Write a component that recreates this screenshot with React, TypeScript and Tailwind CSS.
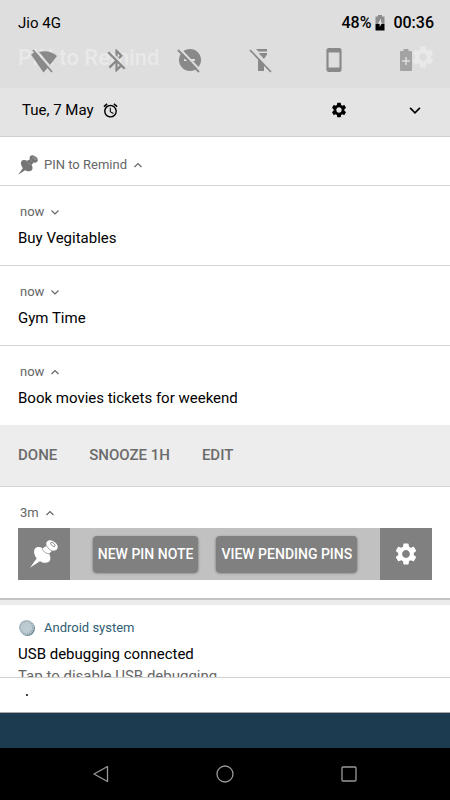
import type { ReactNode } from 'react'
import clsx from 'clsx'
import { MdAlarm, MdBluetoothDisabled, MdSettings, MdStayCurrentPortrait } from 'react-icons/md'

type Note = {
  title: string
  expanded?: boolean
}

const notes: Note[] = [
  { title: 'Buy Vegitables' },
  { title: 'Gym Time' },
  { title: 'Book movies tickets for weekend', expanded: true }
]

const noteActions = ['Done', 'Snooze 1h', 'Edit']

function Chevron({ up, className = 'h-2.5 w-2.5' }: { up?: boolean; className?: string }) {
  return (
    <svg viewBox="0 0 10 10" className={clsx('fill-none stroke-current', className)} aria-hidden="true">
      <path d={up ? 'M1.5 7 5 3.5 8.5 7' : 'M1.5 3.5 5 7 8.5 3.5'} strokeWidth="1.2" />
    </svg>
  )
}

function PushPin({ className, line }: { className?: string; line: string }) {
  return (
    <svg viewBox="0 0 82 82" className={clsx('fill-current', className)} aria-hidden="true">
      <path d="M0 81 21 52 31 61Z" />
      <path d="M14 26C19 19 28 19 37 24L49 17C45 7 51 0 60 1C72 3 83 14 81 23C79 31 72 33 65 31L56 40C61 50 61 59 55 64C47 70 32 66 23 57C13 47 9 34 14 26Z" />
      <path d="M36 24C37 33 46 40 56 40M49 17C52 24 58 30 65 31" fill="none" stroke={line} strokeWidth="2" />
      <ellipse cx="67" cy="13" rx="8" ry="4" transform="rotate(42 67 13)" fill="none" stroke={line} strokeWidth="2.5" />
    </svg>
  )
}

function WifiOff() {
  return (
    <svg viewBox="0 0 28 26" className="h-6.5 w-7 fill-current" aria-hidden="true">
      <path d="M9 5C15 3 23 5 27 9L20 18ZM1 7.5 5 5 18 20.5 13.5 25.5Z" />
      <path d="M3 3 22 25" fill="none" stroke="currentColor" strokeWidth="1.8" />
    </svg>
  )
}

function DndOff() {
  return (
    <svg viewBox="0 0 26 26" className="h-6.5 w-6.5 fill-current" aria-hidden="true">
      <circle cx="14" cy="13" r="11" />
      <path d="M8 13H11M15 13H19" stroke="#dedede" strokeWidth="2" />
      <path d="M3 1 25 24" stroke="#dedede" strokeWidth="2" />
      <path d="M2 3 23 25" stroke="currentColor" strokeWidth="2" />
    </svg>
  )
}

function FlashlightOff() {
  return (
    <svg viewBox="0 0 26 26" className="h-6.5 w-6.5 fill-current" aria-hidden="true">
      <path d="M8 2H19V4.5H10.5ZM11.5 6H19V7.5L16 12 11 6.5ZM10 11 16 17.5V24H10Z" />
      <path d="M2 3 23 25" stroke="currentColor" strokeWidth="1.8" />
    </svg>
  )
}

function BatterySaver() {
  return (
    <svg viewBox="0 0 12 22" className="h-5.5 w-3 text-[#a3a3a3]" aria-hidden="true">
      <path d="M3.5 0H8.5V2H11Q12 2 12 3V21Q12 22 11 22H1Q0 22 0 21V3Q0 2 1 2H3.5Z" fill="currentColor" />
      <path d="M6 8V16M2 12H10" stroke="#dedede" strokeWidth="1.5" />
    </svg>
  )
}

function BatteryCharging() {
  return (
    <svg viewBox="0 0 10 16" className="h-4 w-2.5" aria-hidden="true">
      <path d="M3 0H7V1.5H9.5V9H0.5V1.5H3Z" fill="#8c8c8c" />
      <path d="M0.5 9H9.5V15.5H0.5Z" fill="#000" />
      <path d="M6 3.5 3 8.5H4.7V12L7.3 7.5H6Z" fill="#e6e6e6" />
    </svg>
  )
}

function IconButton({ label, className, children }: { label: string; className?: string; children: ReactNode }) {
  return (
    <button type="button" aria-label={label} className={clsx('flex items-center justify-center', className)}>
      {children}
    </button>
  )
}

const quickTiles: { label: string; icon: ReactNode }[] = [
  { label: 'Wi-Fi', icon: <WifiOff /> },
  { label: 'Bluetooth', icon: <MdBluetoothDisabled size={27} /> },
  { label: 'Do not disturb', icon: <DndOff /> },
  { label: 'Flashlight', icon: <FlashlightOff /> },
  { label: 'Auto-rotate', icon: <MdStayCurrentPortrait size={26} /> },
  { label: 'Battery saver', icon: <BatterySaver /> }
]

function QuickSettings() {
  return (
    <header className="border-b border-[#cfcfcf] bg-[#dedede] text-[15px] text-black">
      <div className="flex h-11 items-center justify-between pt-0.5 pr-4 pl-4.5">
        <span>Jio 4G</span>
        <div className="flex items-center gap-1 text-base font-medium">
          <span>48%</span>
          <BatteryCharging />
          <span className="ml-1">00:36</span>
        </div>
      </div>
      <div className="relative h-11">
        {/* app bar showing faintly through the shade */}
        <div className="absolute inset-0 flex items-start justify-between pr-3.5 pl-4.5 text-[#e9e9e9]" aria-hidden="true">
          <span className="text-[22px]/7 font-medium">PIN to Remind</span>
          <MdSettings size={26} />
        </div>
        <div className="relative flex items-center justify-between px-7.5 pt-0.5 text-[#898989]">
          {quickTiles.map((tile) => (
            <IconButton key={tile.label} label={tile.label} className="h-7 w-7">{tile.icon}</IconButton>
          ))}
        </div>
      </div>
      <div className="flex h-12 items-center justify-between bg-[#e4e4e4] pr-7 pb-1 pl-5.5">
        <div className="flex items-center gap-2">
          <span>Tue, 7 May</span>
          <MdAlarm size={17} />
        </div>
        <div className="flex items-center gap-15">
          <IconButton label="Settings"><MdSettings size={18} /></IconButton>
          <IconButton label="Expand"><Chevron className="h-3.5 w-3.5" /></IconButton>
        </div>
      </div>
    </header>
  )
}

function NoteRow({ note }: { note: Note }) {
  return (
    <article className="border-b border-[#d6d6d6]">
      <div className="px-4.5 pt-4 pb-[15px]">
        <button type="button" aria-expanded={!!note.expanded} className="flex items-center gap-1.5 px-0.5 text-[13px]/5 text-[#666]">
          now
          <Chevron up={note.expanded} />
        </button>
        <h2 className="mt-1 text-[15px]/6">{note.title}</h2>
      </div>
      {note.expanded && (
        <div className="flex h-[61px] items-center gap-8 bg-[#ededed] px-4.5 text-[15px] font-medium text-[#6b6b6b]">
          {noteActions.map((action) => (
            <button key={action} type="button" className="uppercase">{action}</button>
          ))}
        </div>
      )}
    </article>
  )
}

function PinToolbar() {
  return (
    <div className="px-4.5 pt-4 pb-4.5">
      <button type="button" aria-expanded="true" className="flex items-center gap-1.5 px-0.5 text-[13px]/5 text-[#666]">
        3m
        <Chevron up />
      </button>
      <div className="mt-[5px] flex h-13 items-stretch bg-[#c1c1c1] text-white">
        <IconButton label="Pin" className="w-13 bg-[#808080]"><PushPin className="h-7 w-7" line="#808080" /></IconButton>
        <div className="flex flex-1 items-center justify-center gap-4.5 text-sm font-medium">
          <button type="button" className="h-9 rounded bg-[#808080] px-[5px] whitespace-nowrap shadow-sm shadow-black/40">NEW PIN NOTE</button>
          <button type="button" className="h-9 rounded bg-[#808080] px-[5px] whitespace-nowrap shadow-sm shadow-black/40">VIEW PENDING PINS</button>
        </div>
        <IconButton label="Pin settings" className="w-13 bg-[#808080]"><MdSettings size={26} /></IconButton>
      </div>
    </div>
  )
}

function SystemNotification() {
  return (
    <section className="bg-white">
      <div className="h-18 overflow-hidden px-4.5 pt-[13px]">
        <div className="flex items-center gap-2 text-[13px]/5 text-[#2f5d73]">
          <svg viewBox="0 0 18 18" className="h-4.5 w-4.5" aria-hidden="true">
            <circle cx="9.5" cy="9.5" r="7.5" fill="#6f8a97" />
            <circle cx="8.5" cy="8.5" r="7.5" fill="#bccad1" />
            <circle cx="8.5" cy="8.5" r="6.3" fill="none" stroke="#90a4ae" strokeWidth="1.5" strokeDasharray="1 1" />
          </svg>
          <span>Android system</span>
        </div>
        <h2 className="mt-1 text-[15px]/6">USB debugging connected</h2>
        <p className="text-[15px]/5 text-[#666]">Tap to disable USB debugging</p>
      </div>
      <div className="flex h-9 items-center border-t border-b border-t-[#d0d0d0] border-b-[#a8a8a8] pl-6.5">
        <span className="h-0.5 w-0.5 bg-[#444]" />
      </div>
    </section>
  )
}

function NavigationBar() {
  return (
    <nav className="flex h-13 items-center justify-between bg-black px-23 text-[#999]">
      <IconButton label="Back">
        <svg viewBox="0 0 18 18" className="h-4.5 w-4.5 fill-none stroke-current" aria-hidden="true">
          <path d="M15.5 1.5V16.5L2 9Z" strokeWidth="1.3" strokeLinejoin="round" />
        </svg>
      </IconButton>
      <IconButton label="Home">
        <svg viewBox="0 0 18 18" className="h-4.5 w-4.5 fill-none stroke-current" aria-hidden="true">
          <circle cx="9" cy="9" r="8" strokeWidth="1.3" />
        </svg>
      </IconButton>
      <IconButton label="Recent apps">
        <svg viewBox="0 0 18 18" className="h-4.5 w-4.5 fill-none stroke-current" aria-hidden="true">
          <rect x="2" y="2" width="14" height="14" rx="1" strokeWidth="1.3" />
        </svg>
      </IconButton>
    </nav>
  )
}

export default function App() {
  return (
    <div className="flex min-h-screen flex-col bg-[#1d3b50] font-[Roboto,sans-serif] text-black">
      <QuickSettings />
      <main className="bg-[#ececec]">
        <section className="border-b-2 border-[#c4c4c4] bg-white">
          <button type="button" aria-expanded="true" className="flex h-[49px] w-full items-center gap-1.5 border-b border-[#d6d6d6] px-4.5 pt-2 text-[13px] text-[#666]">
            <PushPin className="h-5 w-5 text-[#757575]" line="#a8a8a8" />
            PIN to Remind
            <Chevron up />
          </button>
          {notes.map((note) => (
            <NoteRow key={note.title} note={note} />
          ))}
          <PinToolbar />
        </section>
        <div className="h-[5px]" />
        <SystemNotification />
      </main>
      <div className="flex-1" />
      <NavigationBar />
    </div>
  )
}
